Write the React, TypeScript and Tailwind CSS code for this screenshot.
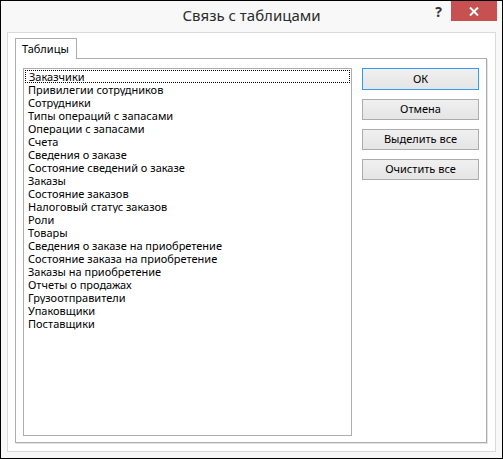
import React from "react";

const TABLES = [
  "Заказчики",
  "Привилегии сотрудников",
  "Сотрудники",
  "Типы операций с запасами",
  "Операции с запасами",
  "Счета",
  "Сведения о заказе",
  "Состояние сведений о заказе",
  "Заказы",
  "Состояние заказов",
  "Налоговый статус заказов",
  "Роли",
  "Товары",
  "Сведения о заказе на приобретение",
  "Состояние заказа на приобретение",
  "Заказы на приобретение",
  "Отчеты о продажах",
  "Грузоотправители",
  "Упаковщики",
  "Поставщики",
];

const BUTTONS = ["Отмена", "Выделить все", "Очистить все"];

export default function App() {
  return (
    <div
      className="w-[503px] h-[459px] border border-black bg-[#f8f8f8] flex flex-col text-black"
      style={{ fontFamily: '"Noto Sans", "Open Sans", sans-serif' }}
    >
      {/* Title bar */}
      <div className="h-[31px] grid grid-cols-[1fr_auto_1fr]">
        <div />
        <div className="pt-[4px] text-[15px] leading-[20px] text-[#2b2b2b]">Связь с таблицами</div>
        <div className="flex justify-end items-start pr-[5px]">
          <span className="mt-[2px] mr-[9px] text-[14px] leading-[18px] font-bold text-[#333]">?</span>
          <button type="button" className="w-[46px] h-[20px] bg-[#c75050] flex items-center justify-center">
            <svg width="10" height="9" viewBox="0 0 10 9">
              <path d="M1 0.5 L9 8.5 M9 0.5 L1 8.5" stroke="#fff" strokeWidth="2" />
            </svg>
          </button>
        </div>
      </div>

      {/* Dialog frame */}
      <div className="flex-1 mx-[6px] mb-[6px] border border-[#dadada] bg-white pt-[5px] pl-[7px] pr-[8px] pb-[8px] flex flex-col">
        <div className="flex">
          <div className="relative z-10 -mb-px h-[21px] w-[62px] border border-b-0 border-[#adadad] bg-white pl-[6px] text-[11px] leading-[19px]">
            Таблицы
          </div>
        </div>

        <div className="flex-1 border border-[#adadad] bg-white shadow-[1px_1px_0_#e3e3e3] flex pt-[9px] pl-[7px] pr-[7px] pb-[6px] gap-[10px]">
          {/* List box */}
          <div className="w-[329px] border border-[#adadad] bg-white pt-px px-px text-[11px] leading-[13px]">
            {TABLES.map((name, i) => (
              <div
                key={name}
                className={`h-[13px] pl-[3px] whitespace-nowrap overflow-hidden ${
                  i === 0 ? "border border-dotted border-black pl-[2px] leading-[11px]" : ""
                }`}
              >
                {name}
              </div>
            ))}
          </div>

          {/* Buttons */}
          <div className="flex flex-col gap-[9px] w-[117px]">
            <button
              type="button"
              className="h-[22px] border border-[#3399ff] bg-gradient-to-b from-[#f0f0f0] to-[#e5e5e5] text-[11px]"
            >
              ОК
            </button>
            {BUTTONS.map((label) => (
              <button
                key={label}
                type="button"
                className="h-[21px] border border-[#acacac] bg-gradient-to-b from-[#f0f0f0] to-[#e5e5e5] text-[11px]"
              >
                {label}
              </button>
            ))}
          </div>
        </div>
      </div>
    </div>
  );
}
